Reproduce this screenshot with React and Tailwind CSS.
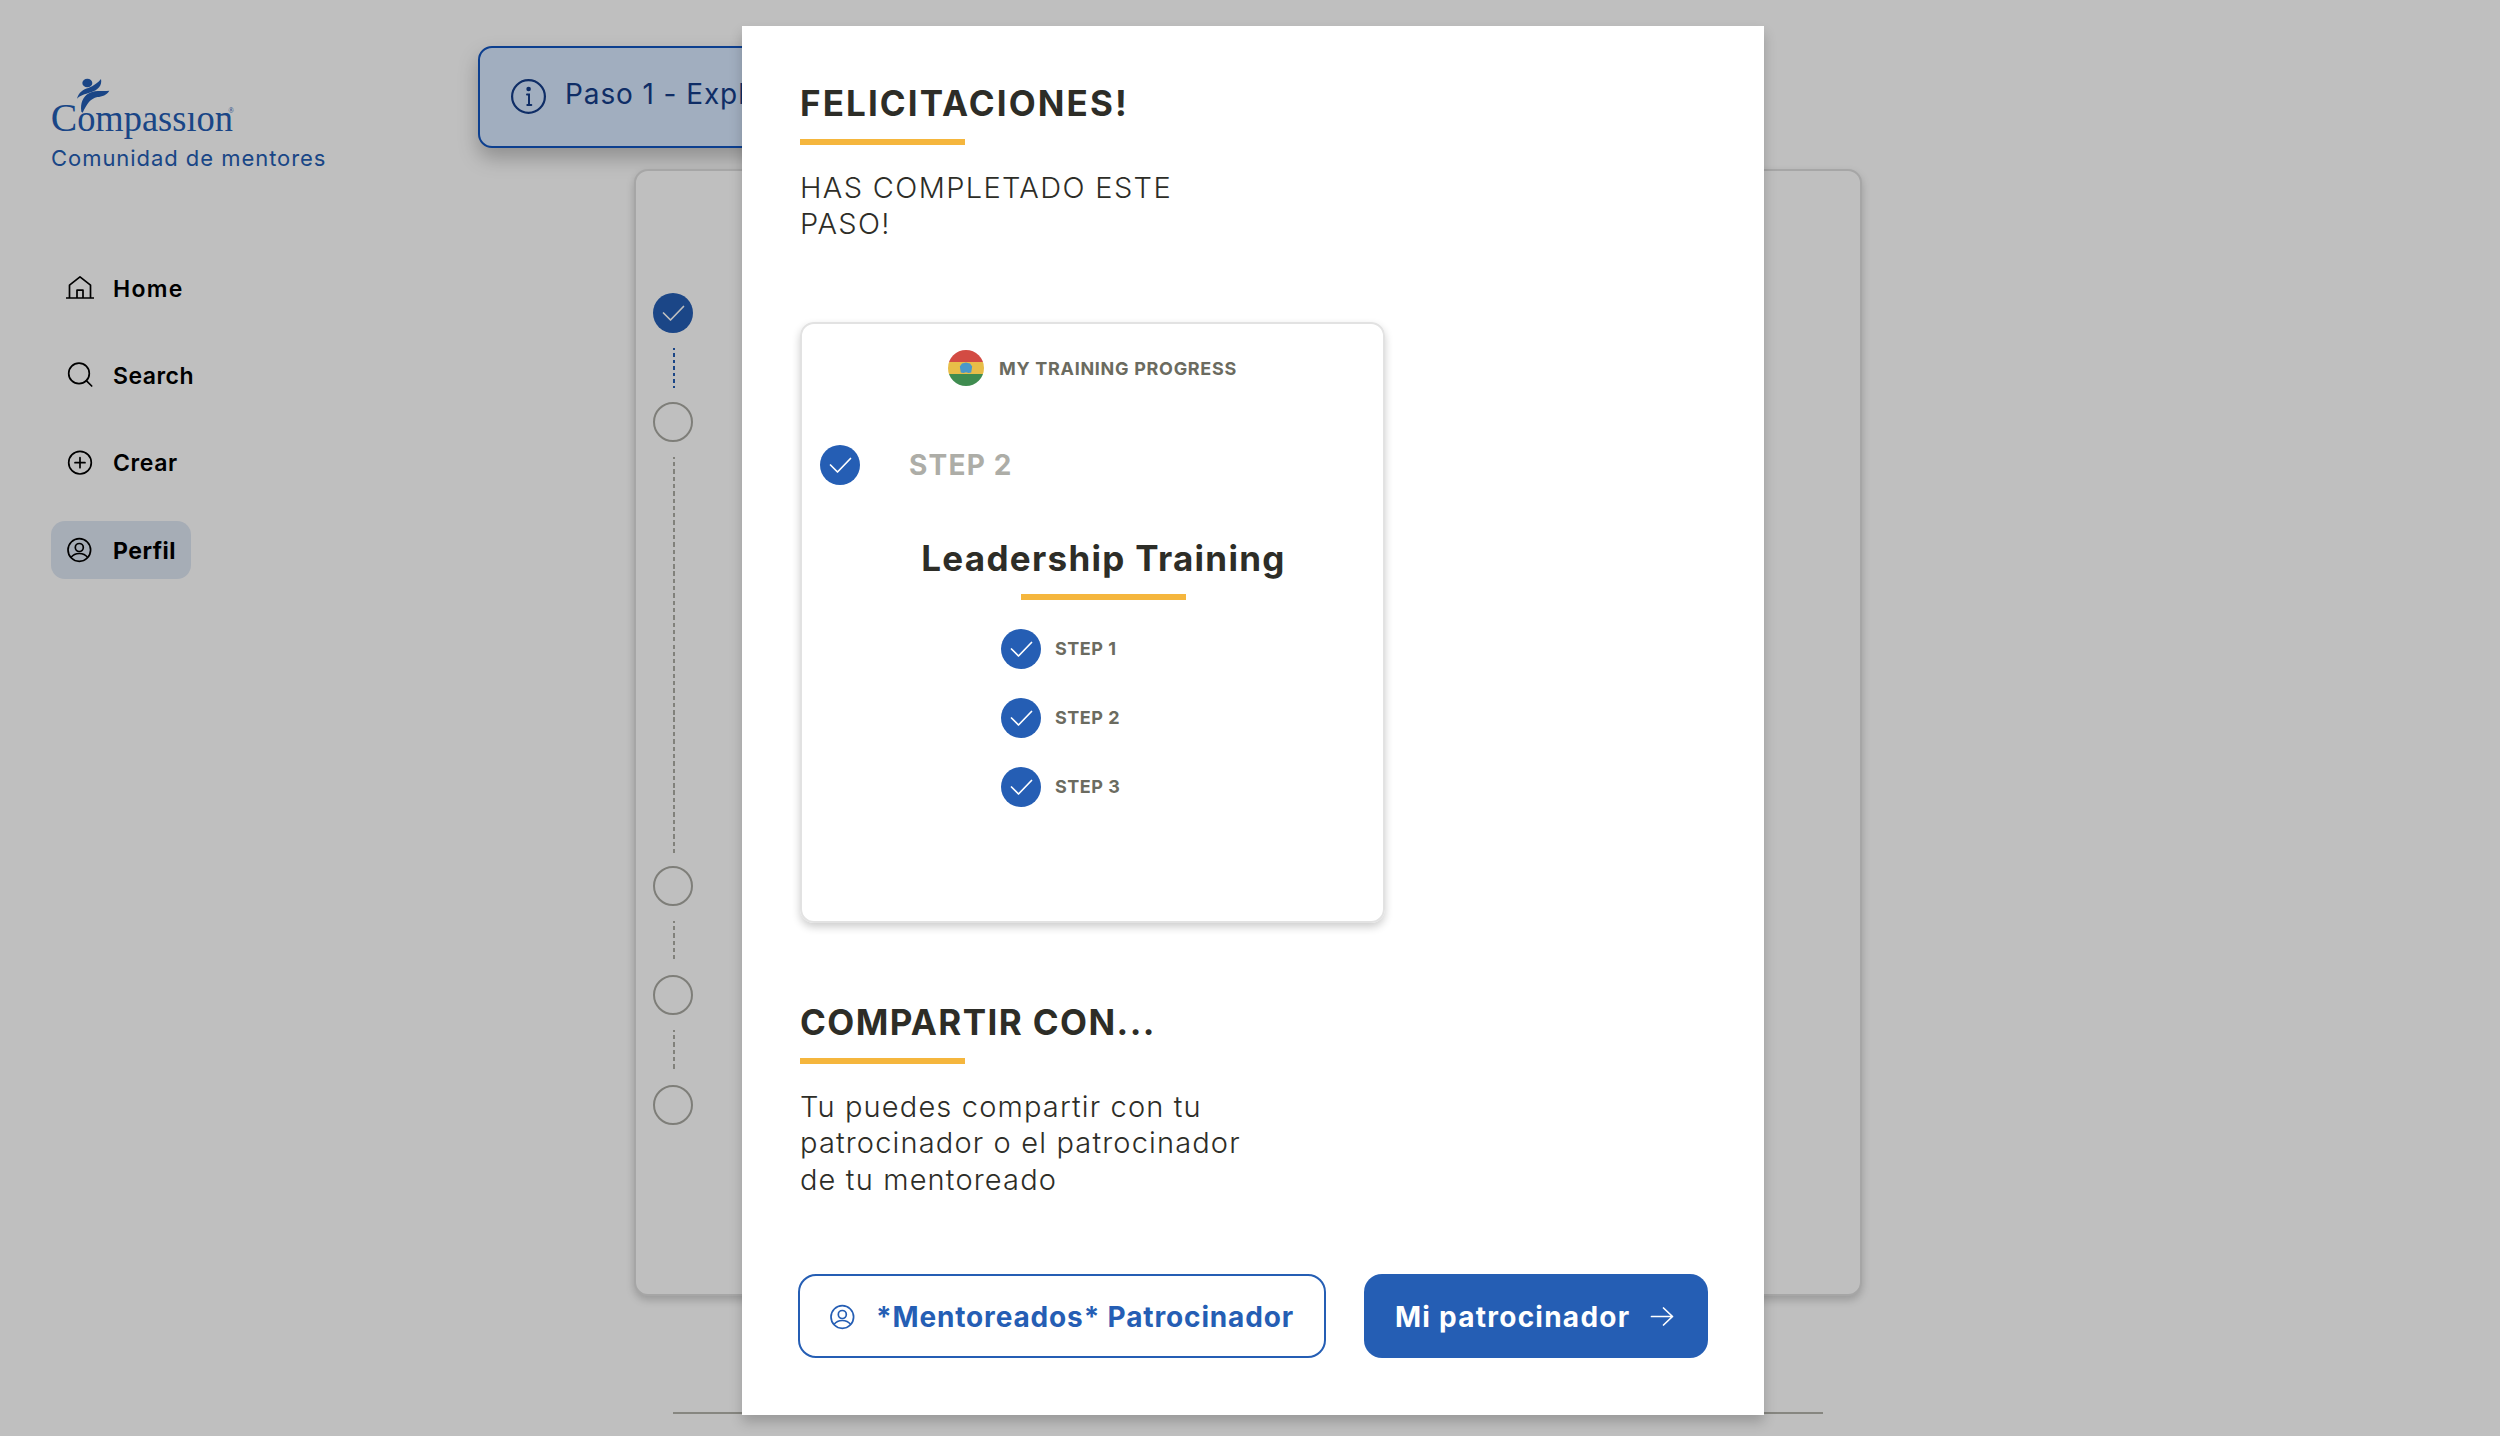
import clsx from 'clsx'

function Logo() {
  return (
    <svg className="w-[184px] h-[63px] overflow-visible" viewBox="150 115 552 189">
      <g fill="#235db3">
        <ellipse cx="259" cy="130" rx="15" ry="13" />
        <path d="M228 177C233 158 247 149 262 145C278 138 291 130 300 118C304 137 291 151 270 158C250 164 238 168 228 177Z" />
        <path d="M325 153C318 166 303 171 289 172C268 177 258 192 245 219L241 216C237 192 246 170 264 161C284 150 305 156 325 153Z" />
        <text
          x="149"
          y="275"
          fontSize="112"
          textLength="547"
          lengthAdjust="spacingAndGlyphs"
          fontFamily="'Liberation Serif', serif"
        >
          <tspan fontSize="122">C</tspan>ompassıon
        </text>
        <text x="682" y="221" fontSize="22" fontFamily="'Liberation Serif', serif">
          ®
        </text>
      </g>
    </svg>
  )
}

function HomeIcon() {
  return (
    <svg className="w-7 h-7" viewBox="0 0 28 28" fill="none" stroke="currentColor" strokeWidth="1.7" strokeLinejoin="round">
      <path d="M0 24h28M3.5 24V11.2L14 2.9l10.5 8.3V24M11 24v-7.8h6V24" />
    </svg>
  )
}

function SearchIcon() {
  return (
    <svg className="w-7 h-7" viewBox="0 0 28 28" fill="none" stroke="currentColor" strokeWidth="1.7" strokeLinecap="round">
      <circle cx="13" cy="12.4" r="10.3" />
      <path d="M20.3 19.6l5.4 5.4" />
    </svg>
  )
}

function PlusIcon() {
  return (
    <svg className="w-7 h-7" viewBox="0 0 28 28" fill="none" stroke="currentColor" strokeWidth="1.7" strokeLinecap="round">
      <circle cx="14" cy="13.7" r="11.3" />
      <path d="M14 8.7v10M9 13.7h10" />
    </svg>
  )
}

function UserIcon() {
  return (
    <svg className="w-7 h-7" viewBox="0 0 28 28" fill="none" stroke="currentColor" strokeWidth="1.7">
      <circle cx="13.3" cy="14" r="11.3" />
      <circle cx="13.3" cy="11.5" r="4" />
      <path d="M5 21.4c2-2.7 5-3.9 8.3-3.9s6.3 1.2 8.3 3.9" />
    </svg>
  )
}

function InfoIcon() {
  return (
    <svg className="w-9 h-9" viewBox="0 0 36 36" fill="none" stroke="currentColor" strokeWidth="2.2" strokeLinecap="round">
      <circle cx="17.5" cy="17.5" r="16.4" />
      <circle cx="17.6" cy="10" r="2.3" fill="currentColor" stroke="none" />
      <path d="M16 15.6h2v10M16.3 26h4" strokeWidth="2" />
    </svg>
  )
}

function ArrowIcon() {
  return (
    <svg className="w-6 h-6" viewBox="0 0 24 24" fill="none" stroke="currentColor" strokeWidth="1.7" strokeLinecap="round" strokeLinejoin="round">
      <path d="M1.5 11.5h21M13.5 3l9 8.5-9 8.5" />
    </svg>
  )
}

function FlagIcon() {
  return (
    <svg className="w-9 h-9 rounded-full" viewBox="0 0 36 36">
      <path fill="#d34b43" d="M0 0h36v12H0z" />
      <path fill="#e8bd48" d="M0 12h36v12H0z" />
      <path fill="#3f8c50" d="M0 24h36v12H0z" />
      <path fill="#4a98cb" d="M14 13.5l4-1 4 1 2.2 3-1 6-2.7.5-2.5-.7-2.5.7-2.7-.5-1-6z" />
    </svg>
  )
}

function CheckCircle() {
  return (
    <div className="w-10 h-10 shrink-0 rounded-full bg-[#255eb4] text-white">
      <svg className="w-10 h-10" viewBox="0 0 40 40" fill="none" stroke="currentColor" strokeWidth="1.7" strokeLinecap="round" strokeLinejoin="round">
        <path d="M10.5 20l7 7 13-13.5" />
      </svg>
    </div>
  )
}

function EmptyCircle() {
  return <div className="w-10 h-10 rounded-full border-2 border-[#a9a9a2]" />
}

// eslint-disable-next-line react/prop-types
function Dots({className}) {
  return <div className={clsx('w-0.5 ml-5', className)} />
}

const GRAY_DOTS =
  'bg-[repeating-linear-gradient(180deg,#adada5_0_2px,transparent_2px_5px,#adada5_5px_7.3px)]'
const BLUE_DOTS =
  'bg-[repeating-linear-gradient(180deg,#235db3_0_2px,transparent_2px_5px,#235db3_5px_6.6px)]'

const NAV = [
  {label: 'Home', Icon: HomeIcon, text: 'tracking-[1.3px] font-semibold'},
  {label: 'Search', Icon: SearchIcon, text: 'tracking-[0.5px] font-semibold'},
  {label: 'Crear', Icon: PlusIcon, text: 'tracking-[0.6px] font-semibold'},
  {label: 'Perfil', Icon: UserIcon, text: 'tracking-[0.5px] font-bold', active: true},
]

function Sidebar() {
  return (
    <aside className="w-[478px] shrink-0 pl-[51px] pt-[78px]">
      <Logo />
      <p className="mt-[3px] text-[22px] leading-7 tracking-[0.95px] text-[#235db3]">
        Comunidad de mentores
      </p>
      <nav className="flex flex-col items-start gap-[29.3px] mt-[87px]">
        {NAV.map(({label, Icon, text, active}) => (
          <a
            key={label}
            className={clsx(
              'flex items-center gap-[19px] h-[58px] w-[140px] pl-[15px] rounded-[14px] text-[23px] text-black cursor-pointer',
              active && 'bg-[#dee7f3]',
            )}
          >
            <span className="shrink-0">
              <Icon />
            </span>
            <span className={clsx('pt-0.5', text)}>{label}</span>
          </a>
        ))}
      </nav>
    </aside>
  )
}

function ProfilePage() {
  return (
    <main className="flex-1 pt-[45.5px]">
      <div className="flex items-center gap-[18px] w-[720px] h-[102px] pl-[31px] rounded-[14px] border-2 border-[#1154bf] bg-[#d7e8ff] text-[#143d88] shadow-[0_10px_20px_rgba(0,0,0,0.25)]">
        <InfoIcon />
        <p className="mb-1.5 text-[28px] tracking-[0.9px]">Paso 1 - Expl</p>
      </div>
      <div className="flex flex-col items-start w-[1228px] h-[1127px] mt-[21.5px] ml-[156px] pt-[122px] pl-[17px] rounded-[14px] border-2 border-[#dedede] shadow-[0_4px_8px_rgba(0,0,0,0.2)] bg-white">
        <CheckCircle />
        <Dots className={clsx('h-10 mt-[15px] mb-3.5', BLUE_DOTS)} />
        <EmptyCircle />
        <Dots className={clsx('h-[396px] mt-[15px] mb-[13px]', GRAY_DOTS)} />
        <EmptyCircle />
        <Dots className={clsx('h-10 mt-[15px] mb-[14px]', GRAY_DOTS)} />
        <EmptyCircle />
        <Dots className={clsx('h-10 mt-[15px] mb-[14.5px]', GRAY_DOTS)} />
        <EmptyCircle />
      </div>
      <div className="w-[1150px] h-0.5 mt-[116px] ml-[195px] bg-[#b3b3ab]" />
    </main>
  )
}

function Underline() {
  return <div className="w-[165px] h-1.5 mt-4 bg-[#f5b63d]" />
}

function ProgressCard() {
  return (
    <section className="flex flex-col w-[585px] h-[601px] mt-[79px] pt-[26.5px] rounded-[14px] border-2 border-[#e2e2e2] shadow-[0_4px_8px_rgba(0,0,0,0.2)]">
      <div className="flex items-center justify-center gap-[15px]">
        <FlagIcon />
        <p className="text-[18px] font-bold tracking-[0.7px] text-[#6b6b60]">MY TRAINING PROGRESS</p>
      </div>
      <div className="flex items-center gap-[49px] mt-[58.5px] pl-[18px]">
        <CheckCircle />
        <p className="text-[28px] leading-10 font-bold tracking-[1.2px] text-[#adada7]">STEP 2</p>
      </div>
      <div className="flex flex-col items-center mt-[53px] pl-[22px]">
        <h3 className="text-[35px] leading-10 font-bold tracking-[1.3px]">Leadership Training</h3>
        <Underline />
      </div>
      <ul className="flex flex-col gap-[29px] mt-[29px] pl-[199px]">
        {['STEP 1', 'STEP 2', 'STEP 3'].map(step => (
          <li key={step} className="flex items-center gap-3.5">
            <CheckCircle />
            <span className="text-[18px] font-bold tracking-[0.5px] text-[#6b6b60]">{step}</span>
          </li>
        ))}
      </ul>
    </section>
  )
}

function CompletedModal() {
  return (
    <div className="absolute inset-0 flex items-start justify-center pt-[26px] pl-1.5 bg-black/25">
      <div
        role="dialog"
        className="w-[1022px] h-[1389px] pt-[57px] pl-[58px] bg-white text-[#2d2d27] shadow-[0_7px_12px_rgba(0,0,0,0.2)]"
      >
        <h2 className="text-[35px] leading-10 font-bold tracking-[2.1px]">FELICITACIONES!</h2>
        <Underline />
        <p className="w-[400px] mt-[24.5px] text-[29px] leading-[36.6px] font-light tracking-[1.35px]">
          HAS COMPLETADO ESTE PASO!
        </p>
        <ProgressCard />
        <h2 className="mt-[79px] text-[35px] leading-10 font-bold tracking-[1.4px]">COMPARTIR CON...</h2>
        <Underline />
        <p className="w-[460px] mt-[25px] text-[29px] leading-[36.6px] font-light tracking-[1.15px]">
          Tu puedes compartir con tu patrocinador o el patrocinador de tu mentoreado
        </p>
        <div className="flex items-center gap-[38px] mt-[76px] -ml-0.5 text-[28px] font-bold">
          <button className="flex items-center gap-[19px] w-[528px] h-[84px] pt-px pl-[29px] rounded-[18px] border-2 border-[#255eb4] text-[#255eb4]">
            <UserIcon />
            <span className="tracking-[0.85px] whitespace-nowrap">*Mentoreados* Patrocinador</span>
          </button>
          <button className="flex items-center gap-5 w-[344px] h-[84px] pt-px pl-[31px] rounded-[18px] bg-[#255eb4] text-white">
            <span className="tracking-[1.25px] whitespace-nowrap">Mi patrocinador</span>
            <ArrowIcon />
          </button>
        </div>
      </div>
    </div>
  )
}

export default function App() {
  return (
    <div className="relative flex w-full h-[1436px] overflow-hidden bg-white font-['Inter',sans-serif]">
      <Sidebar />
      <ProfilePage />
      <CompletedModal />
    </div>
  )
}
